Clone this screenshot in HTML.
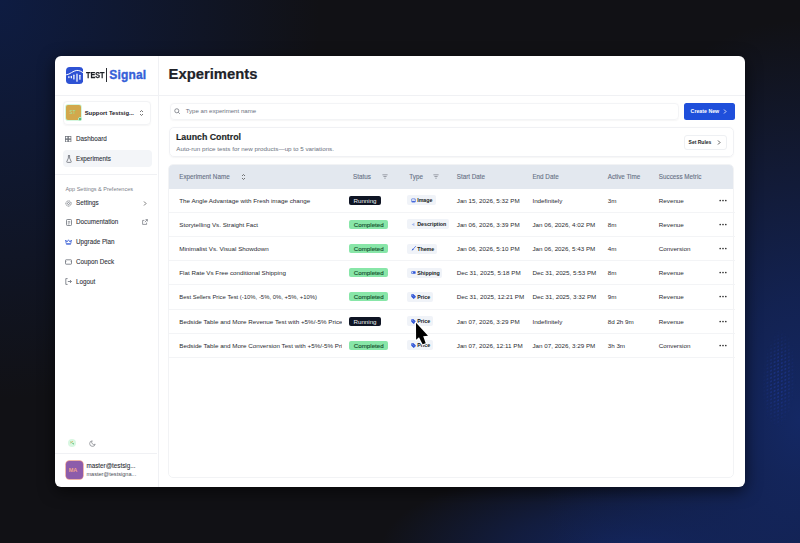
<!DOCTYPE html>
<html><head><meta charset="utf-8">
<style>
*{box-sizing:border-box;margin:0;padding:0}
html,body{width:800px;height:543px;overflow:hidden}
body{position:relative;font-family:"Liberation Sans",sans-serif;color:#1f2329;
background:
radial-gradient(ellipse 320px 400px at 0px 0px, rgba(14,28,66,1) 0%, rgba(14,28,66,0.6) 40%, rgba(17,17,21,0) 100%),
radial-gradient(ellipse 260px 400px at 800px 420px, rgba(20,40,100,1) 0%, rgba(19,37,92,0.85) 30%, rgba(17,17,21,0) 100%),
radial-gradient(ellipse 260px 90px at 640px 550px, rgba(19,37,94,1) 0%, rgba(19,36,90,0.6) 50%, rgba(17,17,21,0) 100%),
#111115;}
.abs{position:absolute}
.t{position:absolute;white-space:nowrap;line-height:10px;height:10px}
#panel{position:absolute;left:55px;top:56px;width:690px;height:431px;background:#fff;border-radius:6px;overflow:hidden;box-shadow:0 4px 16px rgba(0,0,0,.6)}
.hl{position:absolute;height:1px;background:#f0f1f4}
.vl{position:absolute;width:1px;background:#f0f1f4}
.nav{font-size:6.3px;color:#2b2f36;-webkit-text-stroke:0.08px #2b2f36}
.th{font-size:6.3px;color:#667085;-webkit-text-stroke:0.1px #667085}
.td{font-size:6.25px;color:#2a2c31}
.badge{position:absolute;height:9px;border-radius:2px;font-size:6.2px;line-height:9px;text-align:center;white-space:nowrap}
.run{background:#0f1524;color:#eceef3;width:31.5px}
.comp{background:#88e6a8;color:#14502c;width:39px;-webkit-text-stroke:0.12px #14502c}
.chip{position:absolute;height:10px;border-radius:2px;background:#f0f3f8;font-size:5.3px;font-weight:bold;line-height:10px;white-space:nowrap;color:#151a22}
.ci{position:absolute;left:4px;top:2.5px;width:5px;height:5px}
.ico{position:absolute}
</style></head>
<body>
<div id="panel">
  <!-- header divider -->
  <div class="hl" style="left:0;top:38.5px;width:690px"></div>
  <!-- sidebar divider -->
  <div class="vl" style="left:102.5px;top:0;height:431px"></div>

  <!-- logo -->
  <svg class="ico" style="left:10.6px;top:10.5px" width="17.2" height="17" viewBox="0 0 17.2 17">
    <rect x="0" y="0" width="17.2" height="17" rx="3.8" fill="#2e52d4"/>
    <path d="M0.2 7.8 C4 7.6 7 3.6 10.8 3.4 C13.5 3.3 15.5 4.6 17.2 5.8" stroke="#fff" stroke-width="1" fill="none"/>
    <g stroke="#fff" stroke-width="1.25" stroke-linecap="round"><path d="M2.9 9.7 V10.6"/><path d="M5.3 9.5 V10.8"/><path d="M7.9 8.2 V12"/><path d="M11 7 V14.2"/><path d="M13.9 8.3 V12.2"/></g>
  </svg>
  <div class="t" style="left:30.6px;top:15.9px;font-size:8.3px;font-weight:bold;color:#1d2027;line-height:6px;height:6px;-webkit-text-stroke:0.25px #1d2027;transform:scaleX(0.87);transform-origin:0 0">TEST</div>
  <div class="abs" style="left:51px;top:12px;width:1.3px;height:13.5px;background:#2a2d33"></div>
  <div class="t" style="left:54.2px;top:14.2px;font-size:12px;font-weight:bold;color:#3560d8;line-height:10px;letter-spacing:0.2px;-webkit-text-stroke:0.35px #3560d8">Signal</div>

  <!-- store selector -->
  <div class="abs" style="left:7.6px;top:45px;width:88.4px;height:23.7px;border:1px solid #f2f3f5;border-radius:4px;box-shadow:0 0.5px 1.5px rgba(0,0,0,0.04)"></div>
  <div class="abs" style="left:10.8px;top:48.7px;width:15.4px;height:15.8px;background:#d2a84c;border-radius:2px;box-shadow:0 0 0 0.8px #c8f5d6"></div>
  <div class="t" style="left:14.6px;top:51.6px;font-size:4.6px;color:#9fe3a8;letter-spacing:0.2px">ST</div>
  <div class="abs" style="left:23px;top:61px;width:4.4px;height:4.4px;background:#3a9a5e;border-radius:50%;border:0.9px solid #bdf2cc"></div>
  <div class="t" style="left:29.7px;top:52px;font-size:5.9px;font-weight:bold;color:#1e2128">Support Testsig...</div>
  <svg class="ico" style="left:84px;top:53px" width="5" height="8" viewBox="0 0 5 8"><path d="M1 3 L2.5 1.5 L4 3 M1 5 L2.5 6.5 L4 5" stroke="#555" stroke-width="0.8" fill="none"/></svg>

  <!-- nav -->
  <svg class="ico" style="left:10.4px;top:80px" width="6.4" height="6.4" viewBox="0 0 7 7"><g fill="none" stroke="#6b7078" stroke-width="0.8"><rect x="0.5" y="0.5" width="2.6" height="2.6"/><rect x="3.9" y="0.5" width="2.6" height="2.6"/><rect x="0.5" y="3.9" width="2.6" height="2.6"/><rect x="3.9" y="3.9" width="2.6" height="2.6"/></g></svg>
  <div class="t nav" style="left:21px;top:78.2px">Dashboard</div>
  <div class="abs" style="left:7.6px;top:94.2px;width:89px;height:17.3px;background:#f3f5f8;border-radius:4px"></div>
  <svg class="ico" style="left:11px;top:99px" width="6" height="8" viewBox="0 0 6 8"><path d="M2 0.6 H4 M2.4 0.6 V3 L0.8 6.6 C0.6 7.1 0.9 7.4 1.4 7.4 H4.6 C5.1 7.4 5.4 7.1 5.2 6.6 L3.6 3 V0.6" fill="none" stroke="#6b7078" stroke-width="0.8"/></svg>
  <div class="t nav" style="left:21px;top:97.8px">Experiments</div>
  <div class="hl" style="left:0;top:118.4px;width:102px"></div>
  <div class="t" style="left:10.4px;top:127.6px;font-size:5.5px;color:#7b8089">App Settings &amp; Preferences</div>

  <svg class="ico" style="left:10.2px;top:143.8px" width="7" height="7" viewBox="0 0 7 7"><circle cx="3.5" cy="3.5" r="2.6" fill="none" stroke="#6b7078" stroke-width="0.9" stroke-dasharray="1.2 0.6"/><circle cx="3.5" cy="3.5" r="1" fill="none" stroke="#6b7078" stroke-width="0.7"/></svg>
  <div class="t nav" style="left:21px;top:142.2px">Settings</div>
  <svg class="ico" style="left:88.4px;top:144.7px" width="4" height="5" viewBox="0 0 4 5"><path d="M1 0.5 L3 2.5 L1 4.5" stroke="#555" stroke-width="0.8" fill="none"/></svg>

  <svg class="ico" style="left:10.6px;top:162.8px" width="6" height="7" viewBox="0 0 6 7"><rect x="0.5" y="0.5" width="5" height="6" rx="0.8" fill="none" stroke="#6b7078" stroke-width="0.8"/><path d="M1.8 2.5 H4.2 M1.8 3.8 H4.2 M1.8 5 H3.4" stroke="#6b7078" stroke-width="0.6"/></svg>
  <div class="t nav" style="left:21px;top:161.4px">Documentation</div>
  <svg class="ico" style="left:87.2px;top:163px" width="6" height="6" viewBox="0 0 6 6"><path d="M3.5 0.6 H5.4 V2.5 M5.4 0.6 L2.8 3.2 M4.6 3.6 V5.4 H0.6 V1.4 H2.4" stroke="#6b7078" stroke-width="0.7" fill="none"/></svg>

  <svg class="ico" style="left:10.2px;top:182.8px" width="7" height="6" viewBox="0 0 7 6"><path d="M0.6 1 L2 3 L3.5 0.8 L5 3 L6.4 1 L5.8 4.6 H1.2Z" fill="none" stroke="#3a5fd6" stroke-width="0.8" stroke-linejoin="round"/><path d="M1.2 5.4 H5.8" stroke="#3a5fd6" stroke-width="0.7"/></svg>
  <div class="t nav" style="left:21px;top:180.9px">Upgrade Plan</div>

  <svg class="ico" style="left:10.2px;top:202.8px" width="7" height="6" viewBox="0 0 7 6"><rect x="0.5" y="0.8" width="6" height="4.4" rx="0.6" fill="none" stroke="#6b7078" stroke-width="0.8"/><path d="M0.5 2.5 H1.4 M5.6 2.5 H6.5" stroke="#6b7078" stroke-width="0.6"/></svg>
  <div class="t nav" style="left:21px;top:200.8px">Coupon Deck</div>

  <svg class="ico" style="left:10.4px;top:222.4px" width="7" height="7" viewBox="0 0 7 7"><path d="M2.6 0.6 H0.8 V6.4 H2.6 M2.8 3.5 H6.4 M5 2 L6.4 3.5 L5 5" stroke="#6b7078" stroke-width="0.8" fill="none"/></svg>
  <div class="t nav" style="left:21px;top:220.7px">Logout</div>

  <!-- theme toggles -->
  <div class="abs" style="left:12.5px;top:382.9px;width:8.6px;height:8.6px;border-radius:50%;background:#d9f7e2"></div>
  <svg class="ico" style="left:14px;top:384.4px" width="6" height="6" viewBox="0 0 6 6"><path d="M1.6 1.4 L4.6 4.6" stroke="#5cbf7a" stroke-width="0.6"/><circle cx="1.8" cy="2.8" r="0.55" fill="#e0a040"/><circle cx="3.2" cy="1.6" r="0.55" fill="#e0a040"/><circle cx="4.4" cy="3.6" r="0.5" fill="#5cbf7a"/></svg>
  <svg class="ico" style="left:33.6px;top:384px" width="7" height="7" viewBox="0 0 7 7"><path d="M3.2 0.8 A2.8 2.8 0 1 0 6.2 4.2 A2.3 2.3 0 0 1 3.2 0.8 Z" fill="none" stroke="#7a7d84" stroke-width="0.7" stroke-linejoin="round"/></svg>
  <div class="hl" style="left:0;top:396.6px;width:102px;background:#f0f1f4"></div>

  <!-- user -->
  <div class="abs" style="left:10.6px;top:405px;width:17.4px;height:17.7px;border-radius:3.5px;background:#8d5caa;box-shadow:0 0 0 0.7px #e99a8c"></div>
  <div class="t" style="left:13.8px;top:409px;font-size:5.6px;font-weight:bold;color:#f1a28c;letter-spacing:-0.1px">MA</div>
  <div class="t" style="left:31.4px;top:405.3px;font-size:6.3px;color:#2a2d33;-webkit-text-stroke:0.08px #2a2d33">master@testsig...</div>
  <div class="t" style="left:31.4px;top:412.8px;font-size:5.6px;color:#4a4e55">master@testsigna...</div>

  <!-- main header -->
  <div class="t" style="left:113.6px;top:9.9px;font-size:14.8px;font-weight:bold;color:#202228;-webkit-text-stroke:0.2px #202228;line-height:16px;height:16px">Experiments</div>

  <!-- search -->
  <div class="abs" style="left:115px;top:47.4px;width:509px;height:16.6px;border:1px solid #f3f4f6;border-radius:4px;box-shadow:0 0.5px 1.5px rgba(0,0,0,0.04)"></div>
  <svg class="ico" style="left:119.4px;top:52px" width="6.5" height="6.5" viewBox="0 0 7 7"><circle cx="3" cy="3" r="2.2" fill="none" stroke="#6b7078" stroke-width="0.8"/><path d="M4.6 4.6 L6.3 6.3" stroke="#6b7078" stroke-width="0.8"/></svg>
  <div class="t" style="left:130.7px;top:50px;font-size:6.1px;color:#6b7280">Type an experiment name</div>
  <div class="abs" style="left:629px;top:46.5px;width:50.8px;height:17.3px;background:#1f4fdb;border-radius:2.5px"></div>
  <div class="t" style="left:635.6px;top:50.2px;font-size:5.25px;font-weight:bold;color:#fff">Create New</div>
  <svg class="ico" style="left:667.5px;top:52.6px" width="4" height="5" viewBox="0 0 4 5"><path d="M1 0.5 L3 2.5 L1 4.5" stroke="#fff" stroke-width="0.8" fill="none"/></svg>

  <!-- launch card -->
  <div class="abs" style="left:114px;top:71.3px;width:565.3px;height:29.7px;border:1px solid #f0f1f4;border-radius:5px;box-shadow:0 0.5px 1.5px rgba(0,0,0,0.04)"></div>
  <div class="t" style="left:121px;top:75.6px;font-size:8.8px;font-weight:bold;color:#1c1f26;line-height:10px;-webkit-text-stroke:0.15px #1c1f26">Launch Control</div>
  <div class="t" style="left:121.25px;top:88.4px;font-size:6.26px;color:#6b7280">Auto-run price tests for new products—up to 5 variations.</div>
  <div class="abs" style="left:628.5px;top:79px;width:43.5px;height:15.2px;border:1px solid #eef0f3;border-radius:3px"></div>
  <div class="t" style="left:633.6px;top:80.8px;font-size:5px;font-weight:bold;color:#1c1f26">Set Rules</div>
  <svg class="ico" style="left:662px;top:83.8px" width="4" height="5" viewBox="0 0 4 5"><path d="M1 0.5 L3 2.5 L1 4.5" stroke="#333" stroke-width="0.8" fill="none"/></svg>

  <!-- table -->
  <div class="abs" style="left:113.3px;top:107.75px;width:566.2px;height:314px;border:1px solid #f2f3f5;border-radius:5px;overflow:hidden">
    <div class="abs" style="left:0;top:0;width:100%;height:24.45px;background:#e3e8ef"></div>
  </div>
  <div class="t th" style="left:124.25px;top:115.7px">Experiment Name</div>
  <svg class="ico" style="left:186px;top:117px" width="5" height="8" viewBox="0 0 5 8"><path d="M1 3 L2.5 1.5 L4 3 M1 5 L2.5 6.5 L4 5" stroke="#555" stroke-width="0.8" fill="none"/></svg>
  <div class="t th" style="left:298px;top:115.7px">Status</div>
  <svg class="ico" style="left:327.2px;top:118px" width="6" height="5" viewBox="0 0 6 5"><path d="M0.4 0.8 H5.6 M1.4 2.5 H4.6 M2.3 4.2 H3.7" stroke="#7b8089" stroke-width="0.7"/></svg>
  <div class="t th" style="left:354.25px;top:115.7px">Type</div>
  <svg class="ico" style="left:378.4px;top:118px" width="6" height="5" viewBox="0 0 6 5"><path d="M0.4 0.8 H5.6 M1.4 2.5 H4.6 M2.3 4.2 H3.7" stroke="#7b8089" stroke-width="0.7"/></svg>
  <div class="t th" style="left:401.75px;top:115.7px">Start Date</div>
  <div class="t th" style="left:477.4px;top:115.7px">End Date</div>
  <div class="t th" style="left:552.7px;top:115.7px">Active Time</div>
  <div class="t th" style="left:603.8px;top:115.7px">Success Metric</div>
<div class="t td" style="left:124.25px;top:139.69px;width:163px;overflow:hidden;">The Angle Advantage with Fresh image change</div>
<div class="badge run" style="left:294.25px;top:139.78px">Running</div>
<div class="chip" style="left:351.6px;top:139.28px;width:29.1px"><svg class="ci" viewBox="0 0 10 10"><rect x="1.2" y="1.6" width="7.6" height="6.8" rx="1" fill="none" stroke="#2d55d8" stroke-width="1.1"/><path d="M1.6 8 L4 5.2 L6 7 L8.4 5.4 V8 Z" fill="#2d55d8"/><circle cx="6.6" cy="3.6" r="0.7" fill="#2d55d8"/></svg><span style="position:absolute;left:10.6px;top:0">Image</span></div>
<div class="t td" style="left:401.75px;top:139.69px">Jan 15, 2026, 5:32 PM</div>
<div class="t td" style="left:477.4px;top:139.69px">Indefinitely</div>
<div class="t td" style="left:552.7px;top:139.69px">3m</div>
<div class="t td" style="left:603.8px;top:139.69px">Revenue</div>
<svg class="abs" style="left:664px;top:142.78px" width="8" height="3" viewBox="0 0 8 3"><circle cx="1.2" cy="1.5" r="0.85" fill="#333"/><circle cx="4" cy="1.5" r="0.85" fill="#333"/><circle cx="6.8" cy="1.5" r="0.85" fill="#333"/></svg>
<div class="hl" style="background:#f3f4f6;left:114px;width:565.5px;top:155.87px"></div>
<div class="t td" style="left:124.25px;top:163.85px;width:163px;overflow:hidden;">Storytelling Vs. Straight Fact</div>
<div class="badge comp" style="left:294.25px;top:163.85px">Completed</div>
<div class="chip" style="left:351.6px;top:163.45px;width:42.6px"><svg class="ci" viewBox="0 0 10 10"><path d="M6.8 1.6 L3.2 4 H1.8 V6 H3.2 L6.8 8.4Z" fill="#a9bbee"/></svg><span style="position:absolute;left:10.6px;top:0">Description</span></div>
<div class="t td" style="left:401.75px;top:163.85px">Jan 06, 2026, 3:39 PM</div>
<div class="t td" style="left:477.4px;top:163.85px">Jan 06, 2026, 4:02 PM</div>
<div class="t td" style="left:552.7px;top:163.85px">8m</div>
<div class="t td" style="left:603.8px;top:163.85px">Revenue</div>
<svg class="abs" style="left:664px;top:166.95px" width="8" height="3" viewBox="0 0 8 3"><circle cx="1.2" cy="1.5" r="0.85" fill="#333"/><circle cx="4" cy="1.5" r="0.85" fill="#333"/><circle cx="6.8" cy="1.5" r="0.85" fill="#333"/></svg>
<div class="hl" style="background:#f3f4f6;left:114px;width:565.5px;top:180.04px"></div>
<div class="t td" style="left:124.25px;top:188.03px;width:163px;overflow:hidden;">Minimalist Vs. Visual Showdown</div>
<div class="badge comp" style="left:294.25px;top:188.03px">Completed</div>
<div class="chip" style="left:351.6px;top:187.62px;width:30.7px"><svg class="ci" viewBox="0 0 10 10"><path d="M9 1 L5 5.4" stroke="#2d55d8" stroke-width="1.4" stroke-linecap="round"/><path d="M4.3 5.4 C2.8 5.4 2 6.6 1.4 9 C3.8 8.8 5.2 7.8 5.4 6.5Z" fill="#2d55d8"/></svg><span style="position:absolute;left:10.6px;top:0">Theme</span></div>
<div class="t td" style="left:401.75px;top:188.03px">Jan 06, 2026, 5:10 PM</div>
<div class="t td" style="left:477.4px;top:188.03px">Jan 06, 2026, 5:43 PM</div>
<div class="t td" style="left:552.7px;top:188.03px">4m</div>
<div class="t td" style="left:603.8px;top:188.03px">Conversion</div>
<svg class="abs" style="left:664px;top:191.12px" width="8" height="3" viewBox="0 0 8 3"><circle cx="1.2" cy="1.5" r="0.85" fill="#333"/><circle cx="4" cy="1.5" r="0.85" fill="#333"/><circle cx="6.8" cy="1.5" r="0.85" fill="#333"/></svg>
<div class="hl" style="background:#f3f4f6;left:114px;width:565.5px;top:204.21px"></div>
<div class="t td" style="left:124.25px;top:212.20px;width:163px;overflow:hidden;">Flat Rate Vs Free conditional Shipping</div>
<div class="badge comp" style="left:294.25px;top:212.20px">Completed</div>
<div class="chip" style="left:351.6px;top:211.80px;width:35.7px"><svg class="ci" viewBox="0 0 10 10"><rect x="0.8" y="2.4" width="8.4" height="5.2" rx="1.2" fill="#2d55d8"/><rect x="1.9" y="3.5" width="2.3" height="3" rx="0.4" fill="#cdd8f6"/></svg><span style="position:absolute;left:10.6px;top:0">Shipping</span></div>
<div class="t td" style="left:401.75px;top:212.20px">Dec 31, 2025, 5:18 PM</div>
<div class="t td" style="left:477.4px;top:212.20px">Dec 31, 2025, 5:53 PM</div>
<div class="t td" style="left:552.7px;top:212.20px">8m</div>
<div class="t td" style="left:603.8px;top:212.20px">Revenue</div>
<svg class="abs" style="left:664px;top:215.30px" width="8" height="3" viewBox="0 0 8 3"><circle cx="1.2" cy="1.5" r="0.85" fill="#333"/><circle cx="4" cy="1.5" r="0.85" fill="#333"/><circle cx="6.8" cy="1.5" r="0.85" fill="#333"/></svg>
<div class="hl" style="background:#f3f4f6;left:114px;width:565.5px;top:228.38px"></div>
<div class="t td" style="left:124.25px;top:236.37px;width:163px;overflow:hidden; font-size:5.92px;">Best Sellers Price Test (-10%, -5%, 0%, +5%, +10%)</div>
<div class="badge comp" style="left:294.25px;top:236.37px">Completed</div>
<div class="chip" style="left:351.6px;top:235.97px;width:26px"><svg class="ci" viewBox="0 0 10 10"><path d="M1.2 1.2 H5.4 L8.8 4.6 C9.3 5.1 9.3 5.7 8.8 6.2 L6.2 8.8 C5.7 9.3 5.1 9.3 4.6 8.8 L1.2 5.4Z" fill="#2f55d6" stroke="#2f55d6" stroke-width="1.2" stroke-linejoin="round"/><circle cx="3.4" cy="3.4" r="0.8" fill="#dfe6fb"/><path d="M4.4 6.2 L6.2 4.4" stroke="#dfe6fb" stroke-width="0.7"/></svg><span style="position:absolute;left:10.6px;top:0">Price</span></div>
<div class="t td" style="left:401.75px;top:236.37px">Dec 31, 2025, 12:21 PM</div>
<div class="t td" style="left:477.4px;top:236.37px">Dec 31, 2025, 3:32 PM</div>
<div class="t td" style="left:552.7px;top:236.37px">9m</div>
<div class="t td" style="left:603.8px;top:236.37px">Revenue</div>
<svg class="abs" style="left:664px;top:239.47px" width="8" height="3" viewBox="0 0 8 3"><circle cx="1.2" cy="1.5" r="0.85" fill="#333"/><circle cx="4" cy="1.5" r="0.85" fill="#333"/><circle cx="6.8" cy="1.5" r="0.85" fill="#333"/></svg>
<div class="hl" style="background:#f3f4f6;left:114px;width:565.5px;top:252.55px"></div>
<div class="t td" style="left:124.25px;top:260.53px;width:163px;overflow:hidden;">Bedside Table and More Revenue Test with +5%/-5% Price - Bedside</div>
<div class="badge run" style="left:294.25px;top:260.63px">Running</div>
<div class="chip" style="left:351.6px;top:260.13px;width:26px"><svg class="ci" viewBox="0 0 10 10"><path d="M1.2 1.2 H5.4 L8.8 4.6 C9.3 5.1 9.3 5.7 8.8 6.2 L6.2 8.8 C5.7 9.3 5.1 9.3 4.6 8.8 L1.2 5.4Z" fill="#2f55d6" stroke="#2f55d6" stroke-width="1.2" stroke-linejoin="round"/><circle cx="3.4" cy="3.4" r="0.8" fill="#dfe6fb"/><path d="M4.4 6.2 L6.2 4.4" stroke="#dfe6fb" stroke-width="0.7"/></svg><span style="position:absolute;left:10.6px;top:0">Price</span></div>
<div class="t td" style="left:401.75px;top:260.53px">Jan 07, 2026, 3:29 PM</div>
<div class="t td" style="left:477.4px;top:260.53px">Indefinitely</div>
<div class="t td" style="left:552.7px;top:260.53px">8d 2h 9m</div>
<div class="t td" style="left:603.8px;top:260.53px">Revenue</div>
<svg class="abs" style="left:664px;top:263.63px" width="8" height="3" viewBox="0 0 8 3"><circle cx="1.2" cy="1.5" r="0.85" fill="#333"/><circle cx="4" cy="1.5" r="0.85" fill="#333"/><circle cx="6.8" cy="1.5" r="0.85" fill="#333"/></svg>
<div class="hl" style="background:#f3f4f6;left:114px;width:565.5px;top:276.72px"></div>
<div class="t td" style="left:124.25px;top:284.70px;width:163px;overflow:hidden;">Bedside Table and More Conversion Test with +5%/-5% Price - Bedside</div>
<div class="badge comp" style="left:294.25px;top:284.70px">Completed</div>
<div class="chip" style="left:351.6px;top:284.31px;width:26px"><svg class="ci" viewBox="0 0 10 10"><path d="M1.2 1.2 H5.4 L8.8 4.6 C9.3 5.1 9.3 5.7 8.8 6.2 L6.2 8.8 C5.7 9.3 5.1 9.3 4.6 8.8 L1.2 5.4Z" fill="#2f55d6" stroke="#2f55d6" stroke-width="1.2" stroke-linejoin="round"/><circle cx="3.4" cy="3.4" r="0.8" fill="#dfe6fb"/><path d="M4.4 6.2 L6.2 4.4" stroke="#dfe6fb" stroke-width="0.7"/></svg><span style="position:absolute;left:10.6px;top:0">Price</span></div>
<div class="t td" style="left:401.75px;top:284.70px">Jan 07, 2026, 12:11 PM</div>
<div class="t td" style="left:477.4px;top:284.70px">Jan 07, 2026, 3:29 PM</div>
<div class="t td" style="left:552.7px;top:284.70px">3h 3m</div>
<div class="t td" style="left:603.8px;top:284.70px">Conversion</div>
<svg class="abs" style="left:664px;top:287.81px" width="8" height="3" viewBox="0 0 8 3"><circle cx="1.2" cy="1.5" r="0.85" fill="#333"/><circle cx="4" cy="1.5" r="0.85" fill="#333"/><circle cx="6.8" cy="1.5" r="0.85" fill="#333"/></svg>
<div class="hl" style="background:#f3f4f6;left:114px;width:565.5px;top:300.89px"></div>
</div>
<div class="abs" style="left:762px;top:330px;width:34px;height:98px;background-image:radial-gradient(circle, rgba(40,75,205,0.55) 0.5px, rgba(40,75,205,0) 0.8px);background-size:3.6px 3.6px;-webkit-mask-image:radial-gradient(ellipse 50% 50% at 50% 50%, #000 40%, transparent 100%);transform:skewY(-20deg)"></div>
<!-- cursor -->
<svg class="ico" style="left:412px;top:319px" width="22" height="30" viewBox="0 0 22 30">
  <path d="M4 3.7 L4.1 20.8 L7 18.2 L10.6 25.2 L13.7 24.2 L11.2 17.2 L16 16.7 Z" fill="#000" stroke="#fff" stroke-width="2.4" stroke-linejoin="round" paint-order="stroke"/>
</svg>
</body></html>
